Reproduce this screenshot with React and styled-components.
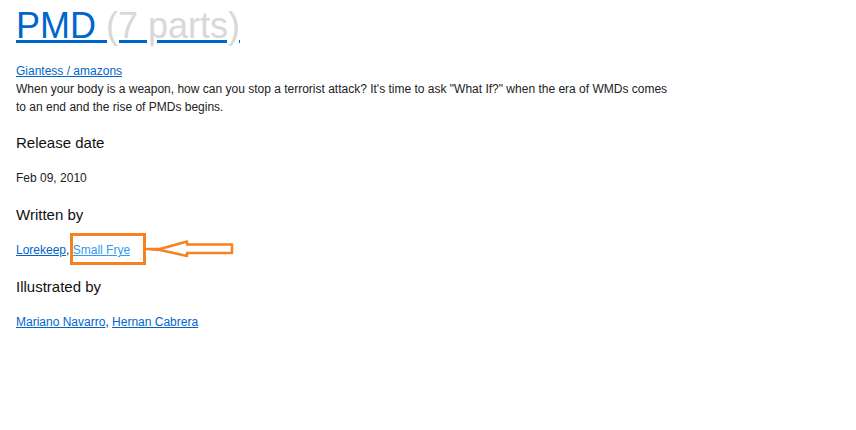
import React from 'react'
import styled, { createGlobalStyle } from 'styled-components'

const GlobalStyle = createGlobalStyle`
  body {
    margin: 0;
    background: #fff;
    font-family: Arial, "Liberation Sans", sans-serif;
    color: #222;
  }
`

const Page = styled.div`
  position: relative;
  width: 856px;
  height: 430px;
  padding: 0 16px;
  box-sizing: border-box;
`

const Title = styled.h1`
  margin: 0;
  padding-top: 5px;
  font-size: 36px;
  line-height: 41px;
  font-weight: normal;
  a {
    color: #0066cc;
    text-decoration: underline;
  }
`

const Parts = styled.span`
  color: #d8d8d8;
`

const Category = styled.a`
  display: block;
  margin-top: 16px;
  font-size: 12px;
  line-height: 18px;
  color: #0066cc;
`

const Description = styled.p`
  margin: 0;
  width: 656px;
  font-size: 12px;
  line-height: 18px;
  color: #222;
`

const Section = styled.div`
  margin-top: ${p => p.$top || 18}px;
`

const Heading = styled.h3`
  margin: 0;
  font-size: 15px;
  line-height: 20px;
  font-weight: normal;
  color: #111;
`

const Value = styled.div`
  margin-top: 16px;
  font-size: 12px;
  line-height: 18px;
  color: #222;
`

const Link = styled.a`
  color: ${p => (p.$light ? '#3399ee' : '#0066cc')};
  text-decoration: underline;
`

const Annotation = styled.svg`
  position: absolute;
  left: 0;
  top: 0;
  pointer-events: none;
`

export default function App() {
  return (
    <Page>
      <GlobalStyle />
      <Title>
        <a href="#">
          PMD <Parts>(7 parts)</Parts>
        </a>
      </Title>
      <Category href="#">Giantess / amazons</Category>
      <Description>
        When your body is a weapon, how can you stop a terrorist attack? It's time to ask "What If?" when the era of
        WMDs comes to an end and the rise of PMDs begins.
      </Description>

      <Section $top={17}>
        <Heading>Release date</Heading>
        <Value>Feb 09, 2010</Value>
      </Section>

      <Section>
        <Heading>Written by</Heading>
        <Value>
          <Link href="#">Lorekeep</Link>, <Link href="#" $light>Small Frye</Link>
        </Value>
      </Section>

      <Section>
        <Heading>Illustrated by</Heading>
        <Value>
          <Link href="#">Mariano Navarro</Link>, <Link href="#">Hernan Cabrera</Link>
        </Value>
      </Section>

      <Annotation width="856" height="430" viewBox="0 0 856 430">
        <rect x="71.5" y="234.5" width="73" height="29" fill="none" stroke="#f58220" strokeWidth="3" />
        <polygon
          points="147,249 160,249 187,241.5 187,244.5 232,244.5 232,253 187,253 187,256 160,250"
          fill="none"
          stroke="#f58220"
          strokeWidth="2.5"
          strokeLinejoin="round"
        />
      </Annotation>
    </Page>
  )
}
